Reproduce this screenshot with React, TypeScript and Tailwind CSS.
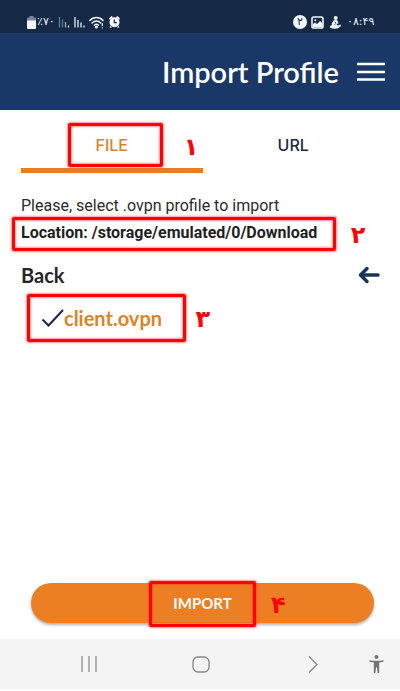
import { useState } from "react";
import { clsx } from "clsx";

const Mark = ({ className }: { className: string }) => (
  <span
    aria-hidden="true"
    className={clsx(
      "pointer-events-none absolute rounded-xs border-3 border-[#fd0404] shadow-[0_0_2px_1px_rgba(255,40,40,0.5),inset_0_0_2px_1px_rgba(255,40,40,0.5)]",
      className
    )}
  />
);

const Step = ({ className, children }: { className: string; children: string }) => (
  <span
    className={clsx(
      "pointer-events-none absolute font-['DejaVu_Sans',sans-serif] text-2xl leading-6 font-bold text-[#fd0404]",
      className
    )}
  >
    {children}
  </span>
);

const StatusBar = () => (
  <div
    dir="ltr"
    className="flex h-[33px] items-end justify-between bg-[#152846] pr-[26px] pb-1 pl-[27px] font-['DejaVu_Sans',sans-serif] text-[#e9f2fa]"
  >
    <div className="flex h-[14px] items-center">
      <svg width="9" height="13" viewBox="0 0 9 13">
        <path d="M2.500 0h4v1.500H8a1 1 0 0 1 1 1V5H0V2.500a1 1 0 0 1 1-1h1.500z" fill="#77869b" />
        <path d="M0 4.500h9V12a1 1 0 0 1-1 1H1a1 1 0 0 1-1-1z" fill="#f4f9fd" />
      </svg>
      <span className="ml-px w-[20px] text-[11px] leading-[14px] whitespace-nowrap">٪۷۰</span>
      <svg className="ml-px" width="27" height="12" viewBox="0 0 27 12" strokeWidth="1.300">
        <path d="M1.500 1v10.500M4.500 3.500v8" stroke="#66788f" />
        <path d="M7.500 6v5.500" stroke="#9aabbd" />
        <path d="M10.500 9.500v2M17 1v10.500M20 4v7.500M23 6.500v5M26 9.500v2" stroke="#e0ebf5" />
      </svg>
      <svg className="ml-1" width="15" height="13" viewBox="0 0 15 13" fill="none" stroke="#e9f2fa" strokeWidth="1.500" strokeLinecap="round">
        <path d="M.8 4.400C4.500 .4 10.500.4 14 4.400M3 7c2.600-2.800 6.300-2.800 8.800 0M5.300 9.300c1.300-1.300 3-1.300 4.200 0" />
        <circle cx="7.400" cy="11" r=".8" fill="#e9f2fa" />
        <path d="M13.300 7.500v2M13.300 11.800v.2" strokeWidth="1.200" />
      </svg>
      <svg className="ml-[5px]" width="11" height="12" viewBox="0 0 11 12">
        <path d="M0 2.500 2.500 0 4 1 1 4zM11 2.500 8.500 0 7 1l3 3z" fill="#f4f9fd" />
        <path d="M1.500 9.500.5 11.500H3zM9.500 9.500l1 2H8z" fill="#f4f9fd" />
        <circle cx="5.500" cy="6.300" r="5" fill="#f4f9fd" />
        <path d="M5.300 3.500v3.200h2.500" stroke="#152846" strokeWidth="1.200" fill="none" />
      </svg>
    </div>
    <div className="flex h-[14px] items-center">
      <span className="flex size-[14px] items-center justify-center rounded-full bg-[#eff7fd] text-[11px] leading-[14px] text-[#152846]">
        ۲
      </span>
      <svg className="ml-1" width="13" height="13" viewBox="0 0 13 13">
        <rect x="1" y="1" width="11" height="11" rx="1.800" fill="none" stroke="#eff7fd" strokeWidth="1.600" />
        <path d="M2 9.500V8l2-1.500 2 1.500L9 5l2.300 2V11H2z" fill="#eff7fd" />
        <circle cx="4.300" cy="4.200" r="1" fill="#eff7fd" />
      </svg>
      <svg className="ml-[6px]" width="11" height="13" viewBox="0 0 11 13" fill="#eff7fd">
        <circle cx="5.700" cy="2" r="2" />
        <path d="M4 4h3l1.500 2.800-2 2.200 1.500.6 2.500-1.200.5 1.600-3 2.300c-2.500.8-5.500.6-8-.8V10l2-1-.3-1.500z" />
        <path d="M4.600 5.500 6 7.200 4.300 9.200" fill="none" stroke="#152846" strokeWidth=".7" />
      </svg>
      <span className="ml-[6px] w-[27px] text-[11px] leading-[14px] whitespace-nowrap">۰۸:۴۹</span>
    </div>
  </div>
);

const NavBar = () => (
  <nav className="mb-[2px] flex h-[50px] items-center bg-[#f4f4f4] pr-4 pl-[33px] text-[#858585]">
    <button aria-label="Recent apps" className="flex flex-1 justify-center">
      <svg width="16" height="16" viewBox="0 0 16 16" stroke="currentColor" strokeWidth="1.200">
        <path d="M1 0v16M8 0v16M15 0v16" />
      </svg>
    </button>
    <button aria-label="Home" className="flex flex-1 justify-center">
      <svg width="18" height="17" viewBox="0 0 18 17" fill="none" stroke="currentColor" strokeWidth="1.300">
        <rect x="1" y="1" width="16" height="15" rx="5" />
      </svg>
    </button>
    <button aria-label="Go back" className="flex flex-1 justify-center">
      <svg width="10" height="17" viewBox="0 0 10 17" fill="none" stroke="currentColor" strokeWidth="1.300">
        <path d="m1 .5 8 8-8 8" />
      </svg>
    </button>
    <button aria-label="Accessibility" className="flex">
      <svg width="15" height="18" viewBox="0 0 15 18" fill="#757575">
        <circle cx="7.500" cy="2" r="2" />
        <path d="M.5 5.200c4.500.7 9.500.7 14 0v1.500l-4.300.7V18H8.600l-.6-5.500H7L6.400 18H4.800V7.400L.5 6.700z" />
      </svg>
    </button>
  </nav>
);

export default function App() {
  const [tab, setTab] = useState("FILE");

  return (
    <div className="flex min-h-screen flex-col bg-white">
      <StatusBar />
      <header className="flex h-[77px] items-center justify-end gap-[18px] bg-[#1a3867] pr-[15px] text-white">
        <h1 className="font-['Lato',sans-serif] text-[29px] leading-8 font-semibold">Import Profile</h1>
        <button aria-label="Menu">
          <svg width="28" height="20" viewBox="0 0 28 20" stroke="currentColor" strokeWidth="2.500">
            <path d="M0 2h28M0 10h28M0 17.500h28" />
          </svg>
        </button>
      </header>

      <main className="flex flex-1 flex-col pt-[13px]">
        <div role="tablist" className="flex pr-4 pl-[21px]">
          {["FILE", "URL"].map((name) => (
            <button
              key={name}
              role="tab"
              aria-selected={tab === name}
              onClick={() => setTab(name)}
              className={clsx(
                "relative h-[50px] flex-1 border-b-5 pb-px font-['Inter',sans-serif] text-base leading-5 font-medium",
                tab === name ? "border-[#e87d24]" : "border-transparent",
                name === "FILE" ? "text-[#d9822f]" : "text-[#1b2947]"
              )}
            >
              {name}
              {name === "FILE" && (
                <>
                  <Mark className="right-10 left-[47px] top-0 h-[44px]" />
                  <Step className="top-3 right-1">۱</Step>
                </>
              )}
            </button>
          ))}
        </div>

        <div className="pt-[23px] pr-5 pl-[21px] font-['Roboto',sans-serif] text-base leading-5 text-[#2b2b2b]">
          <p>Please, select .ovpn profile to import</p>
          <p className="relative mt-[7px] w-fit font-bold text-[#1f1f1f]">
            Location: /storage/emulated/0/Download
            <Mark className="-top-[6px] -right-[19px] -left-[9px] h-[34px]" />
            <Step className="top-0 -right-12">۲</Step>
          </p>
        </div>

        <button className="flex items-center justify-between pt-5 pr-5 pl-[21px] font-['Lato',sans-serif] text-xl leading-6 font-bold text-[#262626]">
          Back
          <svg width="22" height="18" viewBox="0 0 22 18" fill="none" stroke="#17345f" strokeWidth="3.500" strokeLinecap="round" strokeLinejoin="round">
            <path d="M9 2.500 2.500 9 9 15.500M3 9h17" />
          </svg>
        </button>

        <button className="relative mt-[19px] ml-[41px] flex w-fit items-center font-['Lato',sans-serif] text-xl leading-6 font-bold text-[#db8429]">
          <svg width="23" height="18" viewBox="0 0 23 18" fill="none" stroke="#1b2748" strokeWidth="2">
            <path d="m1.500 10.500 6 6L22 1" />
          </svg>
          client.ovpn
          <Mark className="-top-3 -right-6 -left-[14px] h-12" />
          <Step className="top-px -right-12">۳</Step>
        </button>

        <button className="relative mt-auto mr-[26px] mb-4 ml-[31px] h-10 rounded-full bg-[#ec7f24] font-['Lato',sans-serif] text-[15px] leading-6 font-bold text-white shadow-[0_2px_3px_rgba(0,0,0,0.3)]">
          <span className="relative">
            IMPORT
            <Mark className="-inset-x-6 -top-[13px] h-[46px]" />
            <Step className="-top-px -right-[54px]">۴</Step>
          </span>
        </button>
      </main>

      <NavBar />
    </div>
  );
}
